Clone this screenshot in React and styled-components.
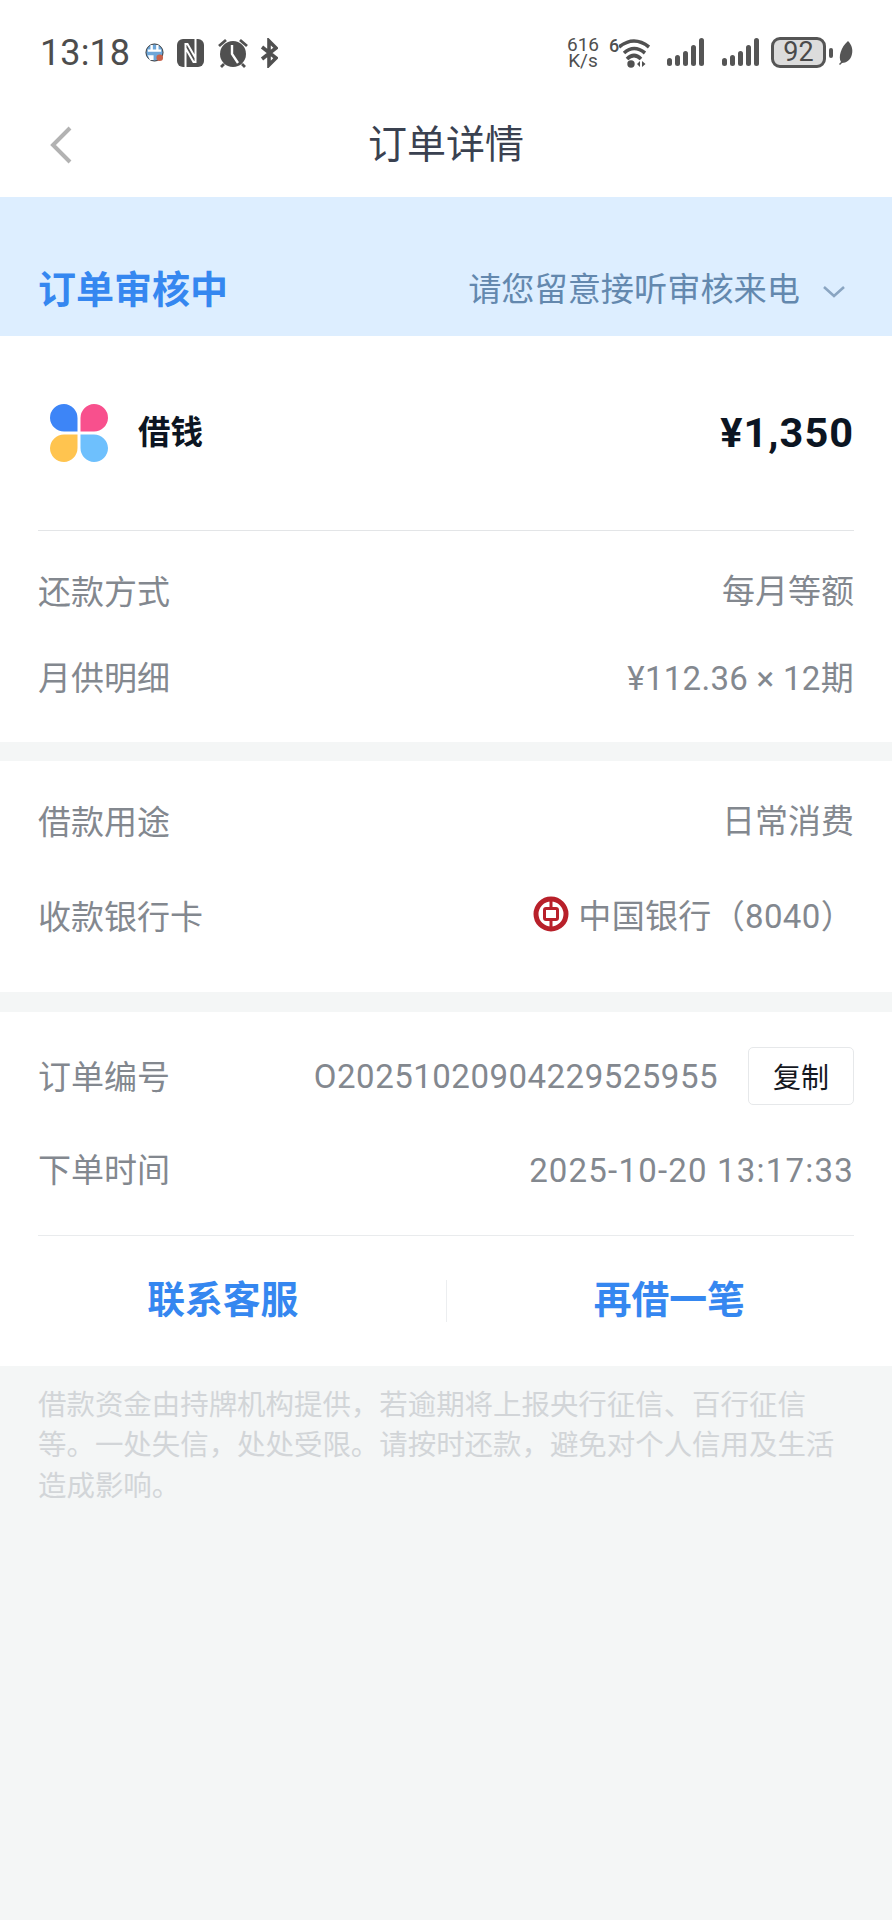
import React from "react";
import styled, { createGlobalStyle } from "styled-components";

const Global = createGlobalStyle`
  html, body { margin: 0; padding: 0; background: #f4f6f6; }
  body { font-family: "Roboto", "Noto Sans CJK SC", sans-serif; }
  * { box-sizing: border-box; }
`;
const Page = styled.div`
  width: 892px; height: 1920px; background: #f4f6f6; display: flex; flex-direction: column; overflow: hidden;
`;
const StatusBar = styled.div`
  height: 98px; background: #fff; display: flex; align-items: center; justify-content: space-between;
  padding: 7px 39px 0 40px; color: #4f4f4f;
`;
const StatusGroup = styled.div`
  display: flex; align-items: center; gap: ${p => p.$gap ?? 10}px;
`;
const Signals = styled(StatusGroup)`
  margin: 0 12px 0 17px;
`;
const Clock = styled.span`
  font: 400 36px/1 "Roboto", sans-serif; margin-right: 4px; letter-spacing: .1px; color: #4d4d4d;
`;
const Speed = styled.span`
  font: 400 19px/16px "Roboto", sans-serif; text-align: center; color: #4f4f4f; display: block; width: 34px; margin-right: 9px;
`;
const WifiTag = styled.span`
  font: 500 18px/18px "Roboto", sans-serif; color: #505050; display: block; width: 9px; margin: 0 1px 13px 0;
`;
const Battery = styled.span`
  width: 55px; height: 31px; border: 3px solid #555; border-radius: 9px; background: #dcdcdc;
  font: 400 27px/25px "Roboto", sans-serif; text-align: center; color: #4a4a4a; display: block;
`;
const BatteryNub = styled.span`
  width: 4px; height: 10px; border-radius: 2px; background: #555; margin: 0 5px 0 3px; display: block;
`;
const Nav = styled.div`
  height: 99px; background: #fff; display: flex; align-items: center; justify-content: center; position: relative;
`;
const Back = styled.svg`
  position: absolute; left: 48px; top: 27px; width: 28px; height: 40px;
`;
const Title = styled.h1`
  margin: 0; font: 400 39px/1 "Noto Sans CJK SC", sans-serif; color: #3a4150; padding-bottom: 13px;
`;
const Banner = styled.div`
  height: 139px; background: #ddeeff; padding: 66px 46px 0 38px; display: flex; justify-content: space-between; align-items: flex-start;
`;
const BannerTitle = styled.div`
  font: 700 38px/48px "Noto Sans CJK SC", sans-serif; color: #3587f0;
`;
const BannerHint = styled.div`
  display: flex; align-items: center; gap: 22px; font: 400 33.2px/48px "Noto Sans CJK SC", sans-serif; color: #6388ae;
`;
const HintChevron = styled.svg`
  width: 24px; height: 14px; margin-top: 9px; display: block;
`;
const Card = styled.section`
  background: #fff; padding: ${p => p.$pad || "0 38px"}; margin-bottom: ${p => p.$mb || 0}px; height: ${p => p.$h}px;
`;
const Product = styled.div`
  height: 195px; display: flex; align-items: center; justify-content: space-between; border-bottom: 1px solid #e3e5e7;
`;
const ProductLeft = styled.div`
  display: flex; align-items: center; gap: 30px; padding-left: 12px;
`;
const ProductName = styled.div`
  font: 700 32.5px/1 "Noto Sans CJK SC", sans-serif; color: #0c1522; padding-bottom: 6px;
`;
const Amount = styled.div`
  font: 700 41.5px/1 "Roboto", "Noto Sans CJK SC", sans-serif; color: #0c1522; letter-spacing: 1px; padding-bottom: 1px;
`;
const Row = styled.div`
  height: ${p => p.$h}px; display: flex; align-items: center; justify-content: space-between;
  padding-top: ${p => p.$pt || 0}px;
`;
const Label = styled.span`
  font: 400 33px/1 "Noto Sans CJK SC", sans-serif; color: #83888f;
`;
const Value = styled.span`
  font: 400 33px/1 "Roboto", "Noto Sans CJK SC", sans-serif; color: #83888f; display: flex; align-items: center;
  letter-spacing: ${p => p.$ls || 0}px; padding-top: 3px;
`;
const ValueWrap = styled.div`
  display: flex; align-items: center; gap: ${p => p.$gap || 9}px;
`;
const Copy = styled.button`
  width: 106px; height: 58px; background: #fff; border: 1px solid #e6e8ea; border-radius: 5px; margin: 1px 0 0 22px;
  font: 400 28px/1 "Noto Sans CJK SC", sans-serif; color: #14181f; padding: 0;
`;
const Rule = styled.div`
  height: 1px; margin-top: 9px; background: #e9ebed;
`;
const Actions = styled.div`
  height: 130px; margin: 0 -38px; display: grid; grid-template-columns: 1fr 1px 1fr; align-items: center;
`;
const Action = styled.div`
  text-align: center; font: 700 37.8px/1 "Noto Sans CJK SC", sans-serif; color: #3587f0; padding-bottom: 8px;
`;
const Divider = styled.div`
  width: 1px; height: 42px; background: #eceef0;
`;
const Note = styled.p`
  margin: 0; padding: 17px 38px 0; font: 400 28.45px/40.4px "Noto Sans CJK SC", sans-serif; color: #d2d5d8; width: 880px;
`;
const Icon = styled.svg`
  display: block; flex: none; margin: ${p => p.$m || 0};
`;

const AppLogo = () => (
  <Icon width="58" height="58" viewBox="0 0 58 58">
    <path fill="#3d85f7" d="M14 0a14 14 0 0 1 13.5 14v13.5H14A14 14 0 0 1 0 14 14 14 0 0 1 14 0z" />
    <path fill="#f8508d" d="M44 0a14 14 0 0 1 14 14 14 14 0 0 1-14 13.5H30.5V14A14 14 0 0 1 44 0z" />
    <path fill="#ffc44f" d="M14 30.5h13.5V44A14 14 0 0 1 14 58 14 14 0 0 1 0 44a14 14 0 0 1 14-13.5z" />
    <path fill="#6ec0fd" d="M30.5 30.5H44A14 14 0 0 1 58 44a14 14 0 0 1-14 14 14 14 0 0 1-13.5-14z" />
  </Icon>
);
const BocLogo = () => (
  <Icon $m="0 0 3px" width="36" height="36" viewBox="0 0 36 36" fill="none" stroke="#b8202a">
    <circle cx="18" cy="18" r="15" strokeWidth="5" />
    <rect x="11.5" y="12.5" width="13" height="11" rx="1.5" strokeWidth="3" />
    <path d="M18 3v9M18 24v9" strokeWidth="3" />
  </Icon>
);
const barHeights = [8, 11, 15, 21, 28];
const Bars = () => (
  <Icon width="37" height="30" viewBox="0 0 37 30" fill="#555">
    {barHeights.map((h, i) => (
      <rect key={i} x={i * 8} y={28 - h} width="5" height={h} rx="2.5" />
    ))}
  </Icon>
);

export default function App() {
  return (
    <Page>
      <Global />
      <StatusBar>
        <StatusGroup $gap={11}>
          <Clock>13:18</Clock>
          <Icon $m="0 2px 0 0" width="19" height="19" viewBox="0 0 20 20">
            <circle cx="10" cy="10" r="9" fill="#6ea6d8" stroke="#333" strokeWidth="1" />
            <path d="M3 8h14M7 2v6M13 2v6" stroke="#fff" strokeWidth="2.5" />
            <path d="M3 13h6v5H5z" fill="#fff" />
            <circle cx="15.5" cy="15.5" r="3.5" fill="#c8624a" />
          </Icon>
          <Icon width="27" height="28" viewBox="0 0 27 28">
            <rect x="0" y="0" width="27" height="28" rx="6" fill="#505050" />
            <path d="M8.5 28V5h2l8 14M18.5 0v23h-2l-8-14" stroke="#fff" strokeWidth="2" fill="none" />
          </Icon>
          <Icon $m="0 0 0 2px" width="32" height="30" viewBox="0 0 32 30">
            <circle cx="16" cy="16" r="13" fill="#505050" />
            <path d="M15 7v9l6 9" stroke="#fff" strokeWidth="2.4" fill="none" />
            <path d="M2 8l7-6M30 8l-7-6M7 26l-3 3M25 26l3 3" stroke="#505050" strokeWidth="2.8" />
          </Icon>
          <Icon width="18" height="30" viewBox="0 0 18 30" fill="none" stroke="#505050" strokeWidth="3.6">
            <path d="M2 9l14 11-7 7V3l7 7L2 21" />
          </Icon>
        </StatusGroup>
        <StatusGroup $gap={0}>
          <Speed>616<br />K/s</Speed>
          <WifiTag>6</WifiTag>
          <Icon width="31" height="30" viewBox="10 0 31 30" fill="none" stroke="#505050" strokeWidth="3.6">
            <path d="M10 9Q25 -3 40 9M15 15Q25 6 36 15M18 21Q25 14 32 21" />
            <circle cx="22" cy="26" r="3.7" fill="#505050" stroke="none" />
            <path d="M31 23l-3 3 3 3zM33 23l3.5 3-3.5 3z" fill="#505050" stroke="none" />
          </Icon>
          <Signals $gap={18}>
            <Bars />
            <Bars />
          </Signals>
          <Battery>92</Battery>
          <BatteryNub />
          <Icon width="15" height="24" viewBox="0 0 15 24">
            <path d="M10 0c4 4 5 9 4 13-1 6-6 9-10 9l-2 2-1-1 2-2C0 16 3 6 10 0z" fill="#555" />
          </Icon>
        </StatusGroup>
      </StatusBar>
      <Nav>
        <Back viewBox="0 0 28 40" fill="none" stroke="#b2b2b2" strokeWidth="4">
          <path d="M22 3L5 20l17 17" />
        </Back>
        <Title>订单详情</Title>
      </Nav>
      <Banner>
        <BannerTitle>订单审核中</BannerTitle>
        <BannerHint>
          请您留意接听审核来电
          <HintChevron viewBox="0 0 24 14" fill="none" stroke="#8aa5c2" strokeWidth="2.6">
            <path d="M2 2l10 9 10-9" />
          </HintChevron>
        </BannerHint>
      </Banner>
      <Card $h={406} $mb={19}>
        <Product>
          <ProductLeft>
            <AppLogo />
            <ProductName>借钱</ProductName>
          </ProductLeft>
          <Amount>¥1,350</Amount>
        </Product>
        <Row $h={98} $pt={20}>
          <Label>还款方式</Label>
          <Value>每月等额</Value>
        </Row>
        <Row $h={95}>
          <Label>月供明细</Label>
          <Value $ls={0.3}>¥112.36 × 12期</Value>
        </Row>
      </Card>
      <Card $h={231} $mb={20}>
        <Row $h={118}>
          <Label>借款用途</Label>
          <Value>日常消费</Value>
        </Row>
        <Row $h={72}>
          <Label>收款银行卡</Label>
          <ValueWrap>
            <BocLogo />
            <Value $ls={0.35}>中国银行（8040）</Value>
          </ValueWrap>
        </Row>
      </Card>
      <Card $h={354} $pad="27px 38px 0">
        <Row $h={72}>
          <Label>订单编号</Label>
          <ValueWrap $gap={8}>
            <Value $ls={0.5}>O20251020904229525955</Value>
            <Copy>复制</Copy>
          </ValueWrap>
        </Row>
        <Row $h={115}>
          <Label>下单时间</Label>
          <Value $ls={1.2}>2025-10-20 13:17:33</Value>
        </Row>
        <Rule />
        <Actions>
          <Action>联系客服</Action>
          <Divider />
          <Action>再借一笔</Action>
        </Actions>
      </Card>
      <Note>借款资金由持牌机构提供，若逾期将上报央行征信、百行征信等。一处失信，处处受限。请按时还款，避免对个人信用及生活造成影响。</Note>
    </Page>
  );
}
